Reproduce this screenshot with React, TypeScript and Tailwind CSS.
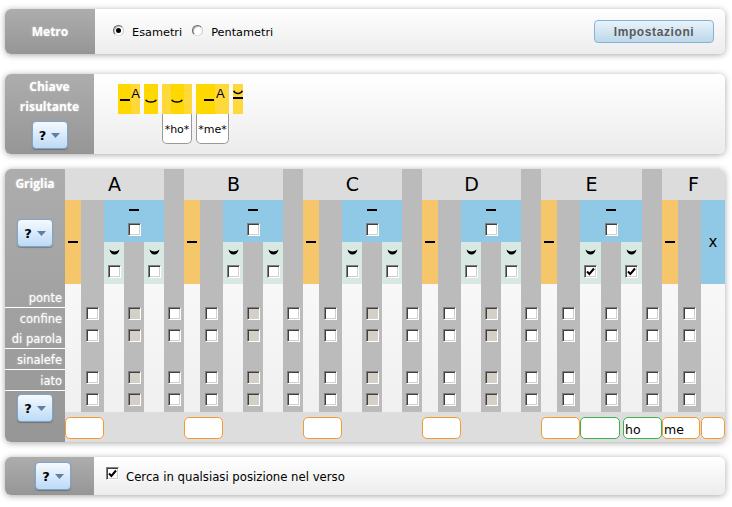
import React from "react";

const sans = "font-['DejaVu_Sans',sans-serif]";

const Long = ({ w = 10 }: { w?: number }) => (
  <svg width={w} height="2" className="block">
    <rect width={w} height="2" fill="#000" />
  </svg>
);

// small filled crescent used in the grid
const Breve = () => (
  <svg width="11" height="6" viewBox="0 0 11 6" className="block">
    <path d="M0.5 0.5C2 1.8 3.5 2.4 5.5 2.4C7.5 2.4 9 1.8 10.5 0.5C10 3.6 8 5.5 5.5 5.5C3 5.5 1 3.6 0.5 0.5Z" fill="#000" />
  </svg>
);

// wider, thinner one used in the key
const KeyBreve = () => (
  <svg width="12" height="5" viewBox="0 0 12 5" className="block">
    <path d="M0.8 0.8C2 3.8 10 3.8 11.2 0.8" fill="none" stroke="#000" strokeWidth="1.5" />
  </svg>
);

const Anceps = () => (
  <svg width="10" height="10" viewBox="0 0 10 10" className="block">
    <path d="M0.7 0.7C2 4.4 8 4.4 9.3 0.7" fill="none" stroke="#000" strokeWidth="1.6" />
    <rect x="0" y="7" width="10" height="2" fill="#000" />
  </svg>
);

const Check = ({ tinted, checked }: { tinted?: boolean; checked?: boolean }) => (
  <div
    className={`w-[13px] h-[13px] shrink-0 border border-t-[#808080] border-l-[#808080] border-r-white border-b-white shadow-[inset_1px_1px_0_#404040,inset_-1px_-1px_0_#d4d0c8] flex items-center justify-center ${
      tinted ? "bg-[#d4d0c8]" : "bg-white"
    }`}
  >
    {checked && (
      <svg width="9" height="9" viewBox="0 0 9 9">
        <path d="M1 4.5L3.4 7L8 1.5" fill="none" stroke="#000" strokeWidth="2" />
      </svg>
    )}
  </div>
);

const HelpButton = ({ className = "" }: { className?: string }) => (
  <button
    className={`w-[36px] h-[28px] rounded-[4px] border border-[#7fa6c8] bg-gradient-to-b from-[#f6faff] to-[#bcdaf6] flex items-center justify-center gap-[5px] shadow-[0_1px_1px_rgba(0,0,0,0.25)] ${className}`}
  >
    <span className={`${sans} text-[13px] font-bold text-black leading-none`}>?</span>
    <svg width="9" height="5" viewBox="0 0 9 5">
      <path d="M0 0H9L4.5 5Z" fill="#5f80a0" />
    </svg>
  </button>
);

const Panel = ({ className = "", children }: { className?: string; children: React.ReactNode }) => (
  <div
    className={`mx-[5px] w-[720px] flex rounded-[6px] overflow-hidden bg-gradient-to-b from-white to-[#ececec] shadow-[0_1px_6px_rgba(0,0,0,0.35)] ${className}`}
  >
    {children}
  </div>
);

const sideClass =
  "shrink-0 bg-gradient-to-b from-[#adadad] to-[#969696] text-white font-bold text-[12px] font-['Open_Sans',sans-serif] [text-shadow:0_0_2px_rgba(255,255,255,0.6)]";

// the four checkboxes of the lower rows, in a gray strip
const GrayStack = ({ pad, tinted, className = "" }: { pad: string; tinted?: boolean; className?: string }) => (
  <div className={`bg-[#bbbbbb] flex flex-col items-center ${pad} ${className}`}>
    <Check tinted={tinted} />
    <div className="mt-[9px]">
      <Check tinted={tinted} />
    </div>
    <div className="mt-[29px]">
      <Check tinted={tinted} />
    </div>
    <div className="mt-[9px]">
      <Check tinted={tinted} />
    </div>
  </div>
);

const Slot = ({
  w,
  green,
  text,
  className = "",
}: {
  w: string;
  green?: boolean;
  text?: string;
  className?: string;
}) => (
  <div
    className={`${w} h-[22px] bg-white rounded-[5px] border text-[12.5px] leading-[24px] pl-[1px] text-black ${sans} ${
      green ? "border-[#3fb14f]" : "border-[#f59a2e]"
    } ${className}`}
  >
    {text}
  </div>
);

const Short = ({ checked }: { checked?: boolean }) => (
  <div className="bg-[#d8e8e3] flex flex-col items-center pt-[7px]">
    <Breve />
    <div className="mt-[10px]">
      <Check checked={checked} />
    </div>
  </div>
);

const Blank = () => <div className="bg-gradient-to-b from-[#f8f8f8] to-[#f0f0f0]" />;

const Foot = ({
  letter,
  cols,
  checked,
  midTinted = true,
  children,
}: {
  letter: string;
  cols: string;
  checked?: boolean;
  midTinted?: boolean;
  children: React.ReactNode;
}) => (
  <div className={`grid ${cols} grid-rows-[31px_42px_42px_128px_30px]`}>
    <div className="col-span-5 bg-[#dcdcdc] flex items-center justify-center text-[19px] text-black">{letter}</div>
    <GrayStack pad="pt-[138px]" className="row-span-4" />
    <div className="row-span-2 bg-[#f5c76a] flex items-center justify-center">
      <Long />
    </div>
    <GrayStack pad="pt-[107px]" className="row-span-3" />
    <div className="col-span-3 bg-[#90c9e6] flex flex-col items-center pt-[9px]">
      <Long />
      <div className="mt-[12px]">
        <Check />
      </div>
    </div>
    <Short checked={checked} />
    <GrayStack pad="pt-[65px]" className="row-span-2" tinted={midTinted} />
    <Short checked={checked} />
    <Blank />
    <Blank />
    <Blank />
    <div className="col-span-6 bg-[#dddddd] flex pt-[5px]">{children}</div>
  </div>
);

const RowLabel = ({ text, border = true, h }: { text: string; border?: boolean; h: string }) => (
  <div
    className={`${h} flex items-center justify-end pr-[3px] pt-[3px] text-[11.5px] font-normal text-white ${sans} ${
      border ? "border-b border-white" : ""
    }`}
  >
    {text}
  </div>
);

const Radio = ({ on }: { on?: boolean }) => (
  <span className="w-[11px] h-[11px] rounded-full border border-[#666] border-b-[#ddd] border-r-[#ccc] shadow-[inset_1px_1px_0_#bbb] bg-white flex items-center justify-center">
    {on && <span className="w-[5px] h-[5px] rounded-full bg-black" />}
  </span>
);

export default function App() {
  return (
    <div className={`w-[732px] h-[507px] bg-white overflow-hidden pt-[9px] ${sans}`}>
      <Panel className="h-[45px]">
        <div className={`${sideClass} w-[90px] flex items-center justify-center`}>Metro</div>
        <div className="flex-1 flex items-center text-[11.3px] text-black pl-[18px] pr-[11px]">
          <div className="-mt-[3px]">
            <Radio on />
          </div>
          <span className="ml-[8px] mt-[4px]">Esametri</span>
          <div className="ml-[10px] -mt-[3px]">
            <Radio />
          </div>
          <span className="ml-[8px] mt-[4px]">Pentametri</span>
          <button className="ml-auto w-[120px] h-[23px] rounded-[4px] border border-[#82b4d8] bg-gradient-to-b from-[#eaf3fa] to-[#bcd7ea] text-[12px] font-bold text-[#5a5a5a] tracking-[0.6px] font-['Liberation_Sans',sans-serif]">
            Impostazioni
          </button>
        </div>
      </Panel>

      <Panel className="h-[80px] mt-[20px]">
        <div className={`${sideClass} w-[89px] flex flex-col items-center pt-[3px] leading-[20px]`}>
          <span>Chiave</span>
          <span>risultante</span>
          <HelpButton className="mt-[4px]" />
        </div>
        <div className="flex pt-[10px] pl-[24px] gap-[4px] text-[12px] text-black">
          <div className="w-[22px] h-[30px] flex bg-[#ffd83a]">
            <div className="w-[14px] bg-[#ffd800] flex items-center justify-center pt-[1px]">
              <Long />
            </div>
            <span className="text-[13px] leading-[13px] pt-[3px] font-['Liberation_Sans',sans-serif]">A</span>
          </div>
          <div className="w-[14px] h-[30px] bg-[#ffd800] flex items-center justify-center pt-[4px]">
            <KeyBreve />
          </div>
          <div className="w-[30px]">
            <div className="h-[30px] bg-[#ffd83a] flex justify-center">
              <div className="w-[13px] bg-[#ffd800] flex items-center justify-center pt-[4px]">
                <KeyBreve />
              </div>
            </div>
            <div className="h-[30px] rounded-b-[5px] border border-t-0 border-[#999] bg-white flex items-center justify-center text-[11px] pt-[4px]">
              *ho*
            </div>
          </div>
          <div className="w-[33px]">
            <div className="h-[30px] bg-[#ffd83a] flex">
              <div className="w-[19px] bg-[#ffd800] flex items-center justify-end pt-[1px] pr-[1px]">
                <Long />
              </div>
              <span className="text-[13px] leading-[13px] pt-[3px] ml-[1px] font-['Liberation_Sans',sans-serif]">A</span>
            </div>
            <div className="h-[30px] rounded-b-[5px] border border-t-0 border-[#999] bg-white flex items-center justify-center text-[11px] pt-[4px]">
              *me*
            </div>
          </div>
          <div className="w-[10px] h-[30px] bg-[#ffd83a] flex justify-center pt-[6px]">
            <Anceps />
          </div>
        </div>
      </Panel>

      <Panel className="h-[273px] mt-[15px]">
        <div className={`${sideClass} w-[60px] flex flex-col`}>
          <div className="h-[30px] flex items-center justify-center">Griglia</div>
          <HelpButton className="mt-[20px] ml-[12px]" />
          <div className="h-[40px]" />
          <RowLabel text="ponte" h="h-[21px]" />
          <RowLabel text="confine" h="h-[20px]" border={false} />
          <RowLabel text="di parola" h="h-[21px]" />
          <RowLabel text="sinalefe" h="h-[21px]" />
          <RowLabel text="iato" h="h-[21px]" />
          <HelpButton className="mt-[3px] ml-[12px]" />
        </div>
        <div className="flex">
          {["A", "B", "C", "D"].map((l) => (
            <Foot key={l} letter={l} cols="grid-cols-[16px_23px_20px_20px_20px_20px]">
              <Slot w="w-[39px]" />
            </Foot>
          ))}
          <Foot letter="E" cols="grid-cols-[16px_23px_21px_20px_21px_20px]" checked midTinted={false}>
            <Slot w="w-[39px]" />
            <Slot w="w-[40px]" green />
            <Slot w="w-[39px]" green text="ho" className="ml-[3px]" />
          </Foot>
          <div className="grid grid-cols-[16px_23px_24px] grid-rows-[31px_42px_42px_128px_30px]">
            <div className="col-span-3 bg-[#dcdcdc] flex items-center justify-center text-[19px] text-black">F</div>
            <div className="row-span-2 bg-[#f5c76a] flex items-center justify-center">
              <Long />
            </div>
            <GrayStack pad="pt-[107px]" className="row-span-3" />
            <div className="row-span-2 bg-[#90c9e6] flex items-center justify-center text-[15px] text-black">x</div>
            <Blank />
            <Blank />
            <div className="col-span-3 bg-[#dddddd] flex pt-[5px]">
              <Slot w="w-[38px]" text="me" />
              <Slot w="w-[24px]" className="ml-[1px]" />
            </div>
          </div>
        </div>
      </Panel>

      <Panel className="h-[38px] mt-[15px]">
        <div className={`${sideClass} w-[89px] flex items-center justify-end pr-[23px]`}>
          <HelpButton />
        </div>
        <div className="flex items-center pl-[12px] text-[11.7px] text-black">
          <div className="-mt-[5px]">
            <Check checked />
          </div>
          <span className="ml-[7px] mt-[4px]">Cerca in qualsiasi posizione nel verso</span>
        </div>
      </Panel>
    </div>
  );
}
